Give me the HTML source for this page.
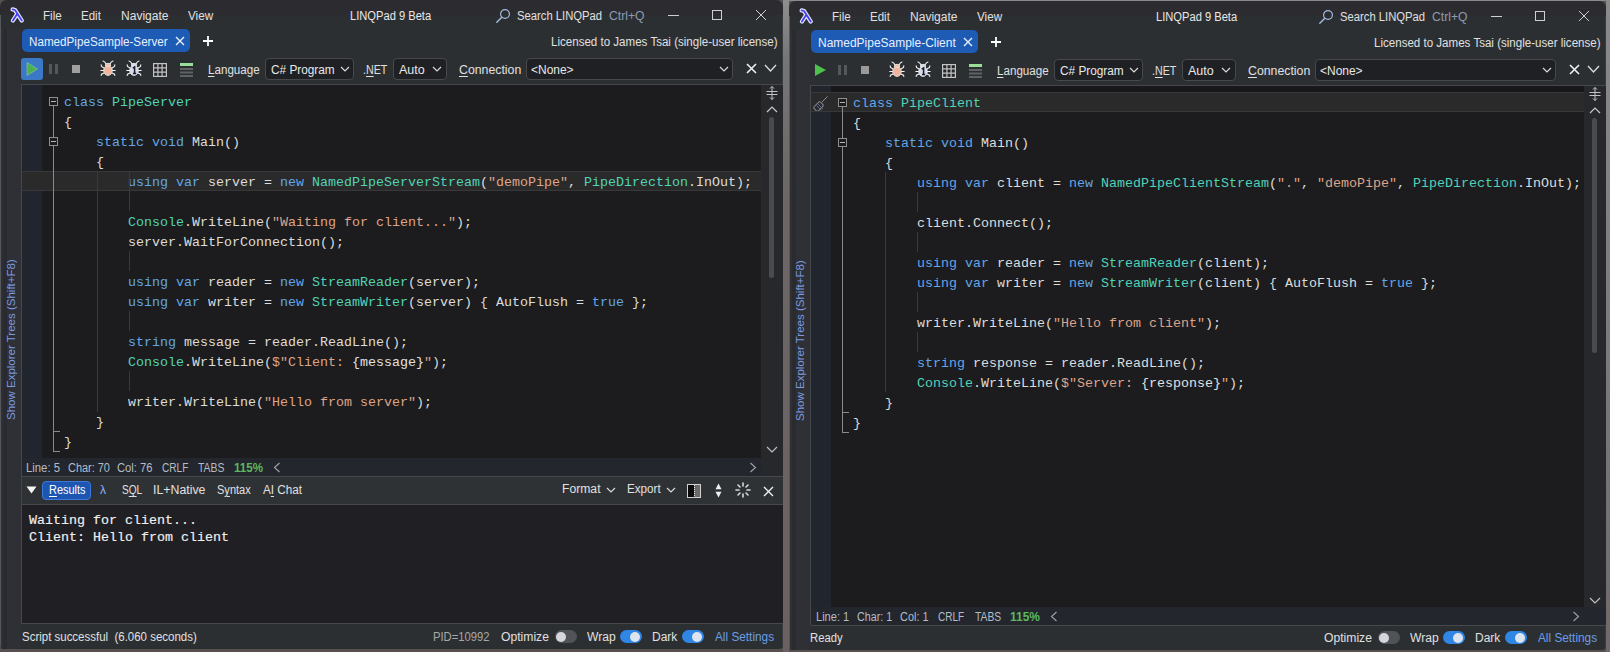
<!DOCTYPE html><html><head><meta charset="utf-8"><style>
*{margin:0;padding:0}
body{width:1610px;height:652px;overflow:hidden;position:relative;background:#57504f;font-family:"Liberation Sans",sans-serif}
.t{position:absolute;white-space:pre;line-height:14px}
.r{position:absolute}
.code{position:absolute;white-space:pre;font-family:"Liberation Mono",monospace;font-size:13.333px;line-height:20px;color:#dcdcdc}
u{text-decoration:underline;text-underline-offset:2px}
</style></head><body>
<div class="r" style="left:783px;top:0px;width:6px;height:652px;background:linear-gradient(#8e8e8e 0px,#767676 60px,#6c6666 200px,#6a6262 652px);"></div>
<div class="r" style="left:789px;top:0px;width:821px;height:1px;background:#8a8a8a;"></div>
<div class="r" style="left:1606px;top:0px;width:4px;height:652px;background:linear-gradient(#8a8a8a,#6e6a6a);"></div>
<div class="r" style="left:0px;top:0px;width:783px;height:649px;background:#2c2f32;border-radius:7px 7px 4px 4px;overflow:hidden;box-shadow:inset 1px 1px 0 #55575b, inset -1px 0 0 #3a3b3f">
<div class="r" style="left:0px;top:0px;width:783px;height:15px;background:#2c2c30;"></div>
<div class="r" style="left:1px;top:28px;width:20px;height:621px;background:#2e3035;"></div>
<div class="r" style="left:3px;top:28px;width:4px;height:621px;background:#2a2b2f;"></div>
<svg class="r" style="left:8px;top:6px;" width="18" height="18" viewBox="0 0 18 18"><path d="M4.6 3.4 L7 4 L13.8 14.6 M9.2 8 L4.9 14.6" fill="none" stroke="#dfe4ff" stroke-width="4.2" stroke-linecap="round" stroke-linejoin="round"/><path d="M4.6 3.4 L7 4 L13.8 14.6 M9.2 8 L4.9 14.6" fill="none" stroke="#4a3ff0" stroke-width="1.8" stroke-linecap="round" stroke-linejoin="round"/></svg>
<div class="t" style="left:42.73px;top:8.84px;font-size:12px;color:#e0e0e0;transform:scaleX(0.9667);transform-origin:0 0;">File</div>
<div class="t" style="left:80.64px;top:8.84px;font-size:12px;color:#e0e0e0;transform:scaleX(0.9600);transform-origin:0 0;">Edit</div>
<div class="t" style="left:120.70px;top:8.84px;font-size:12px;color:#e0e0e0;transform:scaleX(1.0043);transform-origin:0 0;">Navigate</div>
<div class="t" style="left:188.00px;top:8.84px;font-size:12px;color:#e0e0e0;transform:scaleX(0.9731);transform-origin:0 0;">View</div>
<div class="t" style="left:350.17px;top:8.84px;font-size:12px;color:#e8e8e8;transform:scaleX(0.9287);transform-origin:0 0;">LINQPad 9 Beta</div>
<svg class="r" style="left:495px;top:8px;" width="16" height="16" viewBox="0 0 16 16"><circle cx="10" cy="6" r="4.4" fill="none" stroke="#a4bce0" stroke-width="1.2"/><line x1="6.8" y1="9.2" x2="1.8" y2="14.2" stroke="#a4bce0" stroke-width="1.4" stroke-linecap="round"/></svg>
<div class="t" style="left:516.60px;top:8.84px;font-size:12px;color:#e0e0e0;transform:scaleX(0.9378);transform-origin:0 0;">Search LINQPad</div>
<div class="t" style="left:608.70px;top:8.84px;font-size:12px;color:#8c9bb0;transform:scaleX(1.0143);transform-origin:0 0;">Ctrl+Q</div>
<div class="r" style="left:668px;top:15px;width:11px;height:1px;background:#cfcfcf;"></div>
<div class="r" style="left:712px;top:10px;width:10px;height:10px;background:transparent;border:1px solid #cfcfcf;box-sizing:border-box"></div>
<svg class="r" style="left:755px;top:9px;" width="12" height="12" viewBox="0 0 12 12"><path d="M1 1 L11 11 M11 1 L1 11" stroke="#cfcfcf" stroke-width="1"/></svg>
<div class="r" style="left:22px;top:29px;width:168px;height:23px;background:#1d5bb5;border-radius:5px"></div>
<div class="t" style="left:29.03px;top:34.84px;font-size:12px;color:#e8f0ff;transform:scaleX(0.9718);transform-origin:0 0;">NamedPipeSample-Server</div>
<svg class="r" style="left:175px;top:36px;" width="10" height="10" viewBox="0 0 10 10"><path d="M1 1 L9 9 M9 1 L1 9" stroke="#e8f0ff" stroke-width="1.4"/></svg>
<svg class="r" style="left:203px;top:36px;" width="10" height="10" viewBox="0 0 10 10"><path d="M5 0 V10 M0 5 H10" stroke="#ffffff" stroke-width="1.8"/></svg>
<div class="t" style="left:551.34px;top:34.84px;font-size:12px;color:#e0e0e0;transform:scaleX(0.9632);transform-origin:0 0;">Licensed to James Tsai (single-user license)</div>
<div class="r" style="left:21px;top:58px;width:22px;height:22px;background:#3b78c6;border-radius:3px"></div>
<svg class="r" style="left:26px;top:62px;" width="12" height="14" viewBox="0 0 12 14"><path d="M1 0.5 L11.5 7 L1 13.5 Z" fill="#4caf50" stroke="#8fd18f" stroke-width="0.6"/></svg>
<svg class="r" style="left:49px;top:64px;" width="10" height="10" viewBox="0 0 10 10"><rect x="0" y="0" width="3" height="10" fill="#55575b"/><rect x="6" y="0" width="3" height="10" fill="#55575b"/></svg>
<div class="r" style="left:72px;top:65px;width:8px;height:8px;background:#a0a0a0;"></div>
<svg class="r" style="left:100px;top:60px;" width="16" height="17" viewBox="0 0 16 17"><g fill="none" stroke="#f4f4f4" stroke-width="1.1" stroke-linecap="round"><path d="M6.3 4.5 Q5 1.5 3 1 M9.7 4.5 Q11 1.5 13 1"/><path d="M4 8 L1.5 6.5 L1.2 4.8 M12 8 L14.5 6.5 L14.8 4.8 M3.5 10.5 H0.8 M12.5 10.5 H15.2 M4 13 L1.5 14.2 L1.2 15.5 M12 13 L14.5 14.2 L14.8 15.5"/></g><ellipse cx="8" cy="5.3" rx="2.6" ry="2" fill="#efb49c" stroke="#f4f4f4" stroke-width="0.8"/><ellipse cx="8" cy="10.6" rx="4.3" ry="4.8" fill="#efb49c" stroke="#f4f4f4" stroke-width="0.8"/></svg>
<svg class="r" style="left:126px;top:60px;" width="16" height="17" viewBox="0 0 16 17"><g fill="none" stroke="#f4f4f4" stroke-width="1.1" stroke-linecap="round"><path d="M6.3 4.5 Q5 1.5 3 1 M9.7 4.5 Q11 1.5 13 1"/><path d="M4 8 L1.5 6.5 L1.2 4.8 M12 8 L14.5 6.5 L14.8 4.8 M3.5 10.5 H0.8 M12.5 10.5 H15.2 M4 13 L1.5 14.2 L1.2 15.5 M12 13 L14.5 14.2 L14.8 15.5"/></g><ellipse cx="8" cy="5.3" rx="2.6" ry="2" fill="#d4dcea" stroke="#f4f4f4" stroke-width="0.8"/><ellipse cx="8" cy="10.6" rx="4.3" ry="4.8" fill="#d4dcea" stroke="#f4f4f4" stroke-width="0.8"/><path d="M6.8 8.2 L8.6 7 V13.4 M7 13.4 H10.2" fill="none" stroke="#1a1a2a" stroke-width="1.5"/></svg>
<svg class="r" style="left:153px;top:63px;" width="14" height="14" viewBox="0 0 14 14"><rect x="0.6" y="0.6" width="12.8" height="12.8" fill="#26272b" stroke="#c4c4c4" stroke-width="1.2"/><path d="M0.6 4.9 H13.4 M0.6 9.1 H13.4 M4.9 0.6 V13.4 M9.1 0.6 V13.4" stroke="#c4c4c4" stroke-width="1.2"/></svg>
<svg class="r" style="left:180px;top:63px;" width="13" height="14" viewBox="0 0 13 14"><rect x="0" y="0" width="13" height="3" fill="#98e098"/><rect x="0" y="5" width="13" height="2" fill="#606166"/><rect x="0" y="8.5" width="13" height="2" fill="#606166"/><rect x="0" y="12" width="13" height="2" fill="#606166"/></svg>
<div class="t" style="left:208.30px;top:62.84px;font-size:12px;color:#e0e0e0;transform:scaleX(0.9679);transform-origin:0 0;"><u>L</u>anguage</div>
<div class="r" style="left:265px;top:58px;width:89px;height:22px;background:#1f2024;border:1px solid #46484c;border-radius:4px;box-sizing:border-box"></div>
<div class="t" style="left:271.00px;top:62.84px;font-size:12px;color:#e8e8e8;transform:scaleX(0.9844);transform-origin:0 0;">C# Program</div>
<svg class="r" style="left:339.5px;top:66px;" width="10" height="7" viewBox="0 0 10 7"><polyline points="1,1 5.0,5 9,1" fill="none" stroke="#d8d8d8" stroke-width="1.2"/></svg>
<div class="t" style="left:363.11px;top:62.84px;font-size:12px;color:#e0e0e0;transform:scaleX(0.8889);transform-origin:0 0;">.<u>N</u>ET</div>
<div class="r" style="left:393px;top:58px;width:54px;height:22px;background:#1f2024;border:1px solid #46484c;border-radius:4px;box-sizing:border-box"></div>
<div class="t" style="left:399.00px;top:62.84px;font-size:12px;color:#e8e8e8;transform:scaleX(1.0400);transform-origin:0 0;">Auto</div>
<svg class="r" style="left:431.5px;top:66px;" width="10" height="7" viewBox="0 0 10 7"><polyline points="1,1 5.0,5 9,1" fill="none" stroke="#d8d8d8" stroke-width="1.2"/></svg>
<div class="t" style="left:459.00px;top:62.84px;font-size:12px;color:#e0e0e0;transform:scaleX(1.0250);transform-origin:0 0;"><u>C</u>onnection</div>
<div class="r" style="left:526px;top:58px;width:207px;height:22px;background:#1f2024;border:1px solid #46484c;border-radius:4px;box-sizing:border-box"></div>
<div class="t" style="left:530.50px;top:62.84px;font-size:12px;color:#e8e8e8;transform:scaleX(0.9977);transform-origin:0 0;">&lt;None&gt;</div>
<svg class="r" style="left:718.5px;top:66px;" width="10" height="7" viewBox="0 0 10 7"><polyline points="1,1 5.0,5 9,1" fill="none" stroke="#d8d8d8" stroke-width="1.2"/></svg>
<svg class="r" style="left:746px;top:63px;" width="11" height="11" viewBox="0 0 11 11"><path d="M1 1 L10 10 M10 1 L1 10" stroke="#f0f0f0" stroke-width="1.6"/></svg>
<svg class="r" style="left:764px;top:64px;" width="13" height="9" viewBox="0 0 13 9"><polyline points="1,1 6.5,7 12,1" fill="none" stroke="#d8d8d8" stroke-width="1.4"/></svg>
<div class="t" style="left:4px;top:420px;font-size:11.5px;color:#7b9ae0;transform-origin:0 0;transform:rotate(-90deg);white-space:nowrap">Show Explorer Trees (Shift+F8)</div>
<div class="r" style="left:21px;top:84px;width:762px;height:1px;background:#45474b;"></div>
<div class="r" style="left:21px;top:84px;width:1px;height:540px;background:#45474b;"></div>
<div class="r" style="left:22px;top:85px;width:20px;height:373px;background:#21252d;"></div>
<div class="r" style="left:42px;top:85px;width:719px;height:373px;background:#1c1c1e;"></div>
<div class="r" style="left:761px;top:85px;width:22px;height:391px;background:#27282c;"></div>
<div class="r" style="left:22px;top:171px;width:739px;height:20px;background:#2a2a2b;border-top:1px solid #38383a;border-bottom:1px solid #38383a;box-sizing:border-box"></div>
<div class="code" style="left:64px;top:93px"><span style="color:#62a6e6">class</span> <span style="color:#52d2b6">PipeServer</span></div>
<div class="code" style="left:64px;top:113px">{</div>
<div class="code" style="left:64px;top:133px">    <span style="color:#62a6e6">static</span> <span style="color:#62a6e6">void</span> Main()</div>
<div class="code" style="left:64px;top:153px">    {</div>
<div class="code" style="left:64px;top:173px">        <span style="color:#62a6e6">using</span> <span style="color:#62a6e6">var</span> server = <span style="color:#62a6e6">new</span> <span style="color:#52d2b6">NamedPipeServerStream</span>(<span style="color:#dea48a">&quot;demoPipe&quot;</span>, <span style="color:#52d2b6">PipeDirection</span>.InOut);</div>
<div class="code" style="left:64px;top:193px"></div>
<div class="code" style="left:64px;top:213px">        <span style="color:#52d2b6">Console</span>.WriteLine(<span style="color:#dea48a">&quot;Waiting for client...&quot;</span>);</div>
<div class="code" style="left:64px;top:233px">        server.WaitForConnection();</div>
<div class="code" style="left:64px;top:253px"></div>
<div class="code" style="left:64px;top:273px">        <span style="color:#62a6e6">using</span> <span style="color:#62a6e6">var</span> reader = <span style="color:#62a6e6">new</span> <span style="color:#52d2b6">StreamReader</span>(server);</div>
<div class="code" style="left:64px;top:293px">        <span style="color:#62a6e6">using</span> <span style="color:#62a6e6">var</span> writer = <span style="color:#62a6e6">new</span> <span style="color:#52d2b6">StreamWriter</span>(server) { AutoFlush = <span style="color:#62a6e6">true</span> };</div>
<div class="code" style="left:64px;top:313px"></div>
<div class="code" style="left:64px;top:333px">        <span style="color:#62a6e6">string</span> message = reader.ReadLine();</div>
<div class="code" style="left:64px;top:353px">        <span style="color:#52d2b6">Console</span>.WriteLine(<span style="color:#dea48a">$&quot;Client: </span><span style="color:#e2e2e2">{message}</span><span style="color:#dea48a">&quot;</span>);</div>
<div class="code" style="left:64px;top:373px"></div>
<div class="code" style="left:64px;top:393px">        writer.WriteLine(<span style="color:#dea48a">&quot;Hello from server&quot;</span>);</div>
<div class="code" style="left:64px;top:413px">    }</div>
<div class="code" style="left:64px;top:433px">}</div>
<div class="r" style="left:49px;top:97px;width:9px;height:9px;background:#1c1c1e;border:1px solid #8e8e8e;box-sizing:border-box"></div>
<div class="r" style="left:51px;top:101px;width:5px;height:1px;background:#b4b4b4;"></div>
<div class="r" style="left:49px;top:137px;width:9px;height:9px;background:#1c1c1e;border:1px solid #8e8e8e;box-sizing:border-box"></div>
<div class="r" style="left:51px;top:141px;width:5px;height:1px;background:#b4b4b4;"></div>
<div class="r" style="left:53px;top:106px;width:1px;height:31px;background:#8a8a8a;"></div>
<div class="r" style="left:53px;top:146px;width:1px;height:306px;background:#8a8a8a;"></div>
<div class="r" style="left:53px;top:451px;width:7px;height:1px;background:#8a8a8a;"></div>
<div class="r" style="left:53px;top:431px;width:7px;height:1px;background:#8a8a8a;"></div>
<div class="r" style="left:97px;top:171px;width:1px;height:241px;background:#3a3a3c;"></div>
<div class="r" style="left:129px;top:171px;width:1px;height:20px;background:#3a3a3c;"></div>
<div class="r" style="left:129px;top:191px;width:1px;height:20px;background:#3a3a3c;"></div>
<div class="r" style="left:129px;top:251px;width:1px;height:20px;background:#3a3a3c;"></div>
<div class="r" style="left:129px;top:311px;width:1px;height:20px;background:#3a3a3c;"></div>
<div class="r" style="left:129px;top:371px;width:1px;height:20px;background:#3a3a3c;"></div>
<svg class="r" style="left:766px;top:86px;" width="12" height="14" viewBox="0 0 12 14"><path d="M6 0.5 V13.5 M4 2.5 L6 0.5 L8 2.5 M4 11.5 L6 13.5 L8 11.5 M0.5 5.5 H11.5 M0.5 8.5 H11.5" fill="none" stroke="#c4c4c4" stroke-width="1"/></svg>
<svg class="r" style="left:766px;top:105px;" width="12" height="8" viewBox="0 0 12 8"><polyline points="1,7 6,2 11,7" fill="none" stroke="#c8c8c8" stroke-width="1.2"/></svg>
<div class="r" style="left:769px;top:117px;width:5px;height:161px;background:#4a4b4f;border-radius:3px"></div>
<svg class="r" style="left:766px;top:446px;" width="12" height="8" viewBox="0 0 12 8"><polyline points="1,1 6.0,6 11,1" fill="none" stroke="#c0c0c0" stroke-width="1.2"/></svg>
<div class="r" style="left:22px;top:458px;width:739px;height:18px;background:#23262d;"></div>
<div class="t" style="left:26.06px;top:460.84px;font-size:12px;color:#b4bcc6;transform:scaleX(0.9429);transform-origin:0 0;">Line: 5</div>
<div class="t" style="left:67.50px;top:460.84px;font-size:12px;color:#b4bcc6;transform:scaleX(0.9109);transform-origin:0 0;">Char: 70</div>
<div class="t" style="left:116.50px;top:460.84px;font-size:12px;color:#b4bcc6;transform:scaleX(0.9342);transform-origin:0 0;">Col: 76</div>
<div class="t" style="left:161.60px;top:460.84px;font-size:12px;color:#b4bcc6;transform:scaleX(0.8419);transform-origin:0 0;">CRLF</div>
<div class="t" style="left:198.00px;top:460.84px;font-size:12px;color:#b4bcc6;transform:scaleX(0.8667);transform-origin:0 0;">TABS</div>
<div class="t" style="left:234.00px;top:460.84px;font-size:12px;color:#5cb85c;transform:scaleX(0.9667);transform-origin:0 0;"><b>115%</b></div>
<svg class="r" style="left:273px;top:462px;" width="8" height="11" viewBox="0 0 8 11"><polyline points="6.5,1 1.5,5.5 6.5,10" fill="none" stroke="#a0a4aa" stroke-width="1.1"/></svg>
<svg class="r" style="left:748.5px;top:462px;" width="8" height="11" viewBox="0 0 8 11"><polyline points="1.5,1 6.5,5.5 1.5,10" fill="none" stroke="#a0a4aa" stroke-width="1.1"/></svg>
<div class="r" style="left:22px;top:476px;width:761px;height:1px;background:#46484c;"></div>
<div class="r" style="left:22px;top:477px;width:761px;height:27px;background:#2f3235;"></div>
<svg class="r" style="left:26px;top:486px;" width="11" height="8" viewBox="0 0 11 8"><path d="M0.5 0.5 H10.5 L5.5 7.5 Z" fill="#f4f4f4"/></svg>
<div class="r" style="left:42px;top:481px;width:49px;height:19px;background:#1d56b0;border:1px solid #3c78d8;border-radius:4px;box-sizing:border-box"></div>
<div class="t" style="left:48.50px;top:482.84px;font-size:12px;color:#ffffff;transform:scaleX(0.9125);transform-origin:0 0;"><u>R</u>esults</div>
<div class="t" style="left:100.00px;top:482.84px;font-size:12px;color:#8ab0ff;">λ</div>
<div class="t" style="left:121.50px;top:482.84px;font-size:12px;color:#e0e0e0;transform:scaleX(0.8417);transform-origin:0 0;">S<u>Q</u>L</div>
<div class="t" style="left:152.97px;top:482.84px;font-size:12px;color:#e0e0e0;transform:scaleX(1.0280);transform-origin:0 0;">IL+Native</div>
<div class="t" style="left:217.00px;top:482.84px;font-size:12px;color:#e0e0e0;transform:scaleX(0.9189);transform-origin:0 0;">S<u>y</u>ntax</div>
<div class="t" style="left:263.00px;top:482.84px;font-size:12px;color:#e0e0e0;transform:scaleX(0.9750);transform-origin:0 0;">A<u>I</u> Chat</div>
<div class="t" style="left:562.39px;top:481.84px;font-size:12px;color:#e0e0e0;transform:scaleX(1.0135);transform-origin:0 0;">Format</div>
<svg class="r" style="left:606px;top:487px;" width="10" height="7" viewBox="0 0 10 7"><polyline points="1,1 5.0,5 9,1" fill="none" stroke="#d8d8d8" stroke-width="1.2"/></svg>
<div class="t" style="left:627.33px;top:481.84px;font-size:12px;color:#e0e0e0;transform:scaleX(0.9706);transform-origin:0 0;">Export</div>
<svg class="r" style="left:666px;top:487px;" width="10" height="7" viewBox="0 0 10 7"><polyline points="1,1 5.0,5 9,1" fill="none" stroke="#d8d8d8" stroke-width="1.2"/></svg>
<svg class="r" style="left:687px;top:484px;" width="14" height="14" viewBox="0 0 14 14"><rect x="0.5" y="0.5" width="13" height="13" fill="#6a6a6a" stroke="#d0d0d0"/><rect x="1" y="1" width="6" height="12" fill="#0a0a0a"/><line x1="7.5" y1="1" x2="7.5" y2="13" stroke="#e0e0e0" stroke-dasharray="1,1"/></svg>
<svg class="r" style="left:715px;top:483px;" width="7" height="15" viewBox="0 0 7 15"><path d="M3.5 0.5 L6.5 6.3 H0.5 Z M3.5 14.5 L6.5 8.7 H0.5 Z" fill="#f0f0f0"/></svg>
<svg class="r" style="left:735px;top:482px;" width="16" height="16" viewBox="0 0 16 16"><g stroke="#d8d8d8" stroke-width="1.6" stroke-linecap="round"><line x1="8" y1="1" x2="8" y2="4"/><line x1="8" y1="12" x2="8" y2="15"/><line x1="1" y1="8" x2="4" y2="8"/><line x1="12" y1="8" x2="15" y2="8"/><line x1="3" y1="3" x2="5" y2="5"/><line x1="11" y1="11" x2="13" y2="13"/><line x1="13" y1="3" x2="11" y2="5"/><line x1="5" y1="11" x2="3" y2="13"/></g></svg>
<svg class="r" style="left:763px;top:486px;" width="11" height="11" viewBox="0 0 11 11"><path d="M1 1 L10 10 M10 1 L1 10" stroke="#f0f0f0" stroke-width="1.4"/></svg>
<div class="r" style="left:22px;top:504px;width:761px;height:1px;background:#46484c;"></div>
<div class="r" style="left:22px;top:505px;width:761px;height:119px;background:#1f1f24;"></div>
<div class="code" style="left:29px;top:512px;line-height:17px;color:#f0f0f0;-webkit-text-stroke:0.15px #f0f0f0">Waiting for client...
Client: Hello from client</div>
<div class="r" style="left:21px;top:505px;width:1px;height:119px;background:#46484c;"></div>
<div class="r" style="left:21px;top:623px;width:762px;height:1px;background:#46484c;"></div>
<div class="t" style="left:22.00px;top:629.84px;font-size:12px;color:#e0e0e0;transform:scaleX(0.9560);transform-origin:0 0;">Script successful  (6.060 seconds)</div>
<div class="t" style="left:432.56px;top:629.84px;font-size:12px;color:#a8a8a8;transform:scaleX(0.9356);transform-origin:0 0;">PID=10992</div>
<div class="t" style="left:501.40px;top:629.84px;font-size:12px;color:#e0e0e0;transform:scaleX(1.0128);transform-origin:0 0;">Optimize</div>
<div class="r" style="left:554.5px;top:630px;width:22px;height:13px;background:#515359;border-radius:7px"></div>
<div class="r" style="left:556px;top:631.5px;width:10px;height:10px;background:#d6d6de;border-radius:50%"></div>
<div class="t" style="left:586.80px;top:629.84px;font-size:12px;color:#e0e0e0;transform:scaleX(1.0071);transform-origin:0 0;">Wrap</div>
<div class="r" style="left:620px;top:630px;width:22px;height:13px;background:#2f86e4;border-radius:7px"></div>
<div class="r" style="left:630px;top:631.5px;width:10px;height:10px;background:#dde4f0;border-radius:50%"></div>
<div class="t" style="left:652.00px;top:629.84px;font-size:12px;color:#e0e0e0;transform:scaleX(1.0000);transform-origin:0 0;">Dark</div>
<div class="r" style="left:682px;top:630px;width:22px;height:13px;background:#2f86e4;border-radius:7px"></div>
<div class="r" style="left:692px;top:631.5px;width:10px;height:10px;background:#dde4f0;border-radius:50%"></div>
<div class="t" style="left:715.00px;top:629.84px;font-size:12px;color:#6a9ee6;transform:scaleX(0.9833);transform-origin:0 0;">All Settings</div>
</div>
<div class="r" style="left:789px;top:1px;width:817px;height:649px;background:#2c2f32;border-radius:7px 7px 4px 4px;overflow:hidden;box-shadow:inset 1px 1px 0 #55575b, inset -1px 0 0 #3a3b3f">
<div class="r" style="left:0px;top:0px;width:817px;height:15px;background:#2c2c30;"></div>
<div class="r" style="left:1px;top:28px;width:20px;height:621px;background:#2e3035;"></div>
<div class="r" style="left:3px;top:28px;width:4px;height:621px;background:#2a2b2f;"></div>
<svg class="r" style="left:8px;top:6px;" width="18" height="18" viewBox="0 0 18 18"><path d="M4.6 3.4 L7 4 L13.8 14.6 M9.2 8 L4.9 14.6" fill="none" stroke="#dfe4ff" stroke-width="4.2" stroke-linecap="round" stroke-linejoin="round"/><path d="M4.6 3.4 L7 4 L13.8 14.6 M9.2 8 L4.9 14.6" fill="none" stroke="#4a3ff0" stroke-width="1.8" stroke-linecap="round" stroke-linejoin="round"/></svg>
<div class="t" style="left:42.73px;top:8.84px;font-size:12px;color:#e0e0e0;transform:scaleX(0.9667);transform-origin:0 0;">File</div>
<div class="t" style="left:80.64px;top:8.84px;font-size:12px;color:#e0e0e0;transform:scaleX(0.9600);transform-origin:0 0;">Edit</div>
<div class="t" style="left:120.70px;top:8.84px;font-size:12px;color:#e0e0e0;transform:scaleX(1.0043);transform-origin:0 0;">Navigate</div>
<div class="t" style="left:188.00px;top:8.84px;font-size:12px;color:#e0e0e0;transform:scaleX(0.9731);transform-origin:0 0;">View</div>
<div class="t" style="left:367.17px;top:8.84px;font-size:12px;color:#e8e8e8;transform:scaleX(0.9287);transform-origin:0 0;">LINQPad 9 Beta</div>
<svg class="r" style="left:529px;top:8px;" width="16" height="16" viewBox="0 0 16 16"><circle cx="10" cy="6" r="4.4" fill="none" stroke="#a4bce0" stroke-width="1.2"/><line x1="6.8" y1="9.2" x2="1.8" y2="14.2" stroke="#a4bce0" stroke-width="1.4" stroke-linecap="round"/></svg>
<div class="t" style="left:550.60px;top:8.84px;font-size:12px;color:#e0e0e0;transform:scaleX(0.9378);transform-origin:0 0;">Search LINQPad</div>
<div class="t" style="left:642.70px;top:8.84px;font-size:12px;color:#8c9bb0;transform:scaleX(1.0143);transform-origin:0 0;">Ctrl+Q</div>
<div class="r" style="left:702px;top:15px;width:11px;height:1px;background:#cfcfcf;"></div>
<div class="r" style="left:746px;top:10px;width:10px;height:10px;background:transparent;border:1px solid #cfcfcf;box-sizing:border-box"></div>
<svg class="r" style="left:789px;top:9px;" width="12" height="12" viewBox="0 0 12 12"><path d="M1 1 L11 11 M11 1 L1 11" stroke="#cfcfcf" stroke-width="1"/></svg>
<div class="r" style="left:22px;top:29px;width:167px;height:23px;background:#1d5bb5;border-radius:5px"></div>
<div class="t" style="left:29.30px;top:34.84px;font-size:12px;color:#e8f0ff;transform:scaleX(0.9978);transform-origin:0 0;">NamedPipeSample-Client</div>
<svg class="r" style="left:174px;top:36px;" width="10" height="10" viewBox="0 0 10 10"><path d="M1 1 L9 9 M9 1 L1 9" stroke="#e8f0ff" stroke-width="1.4"/></svg>
<svg class="r" style="left:202px;top:36px;" width="10" height="10" viewBox="0 0 10 10"><path d="M5 0 V10 M0 5 H10" stroke="#ffffff" stroke-width="1.8"/></svg>
<div class="t" style="left:585.34px;top:34.84px;font-size:12px;color:#e0e0e0;transform:scaleX(0.9632);transform-origin:0 0;">Licensed to James Tsai (single-user license)</div>
<svg class="r" style="left:25px;top:62px;" width="14" height="14" viewBox="0 0 14 14"><path d="M1 1 L12 7 L1 13 Z" fill="#4cc14e"/></svg>
<svg class="r" style="left:49px;top:64px;" width="10" height="10" viewBox="0 0 10 10"><rect x="0" y="0" width="3" height="10" fill="#55575b"/><rect x="6" y="0" width="3" height="10" fill="#55575b"/></svg>
<div class="r" style="left:72px;top:65px;width:8px;height:8px;background:#9a9a9a;"></div>
<svg class="r" style="left:100px;top:60px;" width="16" height="17" viewBox="0 0 16 17"><g fill="none" stroke="#f4f4f4" stroke-width="1.1" stroke-linecap="round"><path d="M6.3 4.5 Q5 1.5 3 1 M9.7 4.5 Q11 1.5 13 1"/><path d="M4 8 L1.5 6.5 L1.2 4.8 M12 8 L14.5 6.5 L14.8 4.8 M3.5 10.5 H0.8 M12.5 10.5 H15.2 M4 13 L1.5 14.2 L1.2 15.5 M12 13 L14.5 14.2 L14.8 15.5"/></g><ellipse cx="8" cy="5.3" rx="2.6" ry="2" fill="#efb49c" stroke="#f4f4f4" stroke-width="0.8"/><ellipse cx="8" cy="10.6" rx="4.3" ry="4.8" fill="#efb49c" stroke="#f4f4f4" stroke-width="0.8"/></svg>
<svg class="r" style="left:126px;top:60px;" width="16" height="17" viewBox="0 0 16 17"><g fill="none" stroke="#f4f4f4" stroke-width="1.1" stroke-linecap="round"><path d="M6.3 4.5 Q5 1.5 3 1 M9.7 4.5 Q11 1.5 13 1"/><path d="M4 8 L1.5 6.5 L1.2 4.8 M12 8 L14.5 6.5 L14.8 4.8 M3.5 10.5 H0.8 M12.5 10.5 H15.2 M4 13 L1.5 14.2 L1.2 15.5 M12 13 L14.5 14.2 L14.8 15.5"/></g><ellipse cx="8" cy="5.3" rx="2.6" ry="2" fill="#d4dcea" stroke="#f4f4f4" stroke-width="0.8"/><ellipse cx="8" cy="10.6" rx="4.3" ry="4.8" fill="#d4dcea" stroke="#f4f4f4" stroke-width="0.8"/><path d="M6.8 8.2 L8.6 7 V13.4 M7 13.4 H10.2" fill="none" stroke="#1a1a2a" stroke-width="1.5"/></svg>
<svg class="r" style="left:153px;top:63px;" width="14" height="14" viewBox="0 0 14 14"><rect x="0.6" y="0.6" width="12.8" height="12.8" fill="#26272b" stroke="#c4c4c4" stroke-width="1.2"/><path d="M0.6 4.9 H13.4 M0.6 9.1 H13.4 M4.9 0.6 V13.4 M9.1 0.6 V13.4" stroke="#c4c4c4" stroke-width="1.2"/></svg>
<svg class="r" style="left:180px;top:63px;" width="13" height="14" viewBox="0 0 13 14"><rect x="0" y="0" width="13" height="3" fill="#98e098"/><rect x="0" y="5" width="13" height="2" fill="#606166"/><rect x="0" y="8.5" width="13" height="2" fill="#606166"/><rect x="0" y="12" width="13" height="2" fill="#606166"/></svg>
<div class="t" style="left:208.30px;top:62.84px;font-size:12px;color:#e0e0e0;transform:scaleX(0.9679);transform-origin:0 0;"><u>L</u>anguage</div>
<div class="r" style="left:265px;top:58px;width:89px;height:22px;background:#1f2024;border:1px solid #46484c;border-radius:4px;box-sizing:border-box"></div>
<div class="t" style="left:271.00px;top:62.84px;font-size:12px;color:#e8e8e8;transform:scaleX(0.9844);transform-origin:0 0;">C# Program</div>
<svg class="r" style="left:339.5px;top:66px;" width="10" height="7" viewBox="0 0 10 7"><polyline points="1,1 5.0,5 9,1" fill="none" stroke="#d8d8d8" stroke-width="1.2"/></svg>
<div class="t" style="left:363.11px;top:62.84px;font-size:12px;color:#e0e0e0;transform:scaleX(0.8889);transform-origin:0 0;">.<u>N</u>ET</div>
<div class="r" style="left:393px;top:58px;width:54px;height:22px;background:#1f2024;border:1px solid #46484c;border-radius:4px;box-sizing:border-box"></div>
<div class="t" style="left:399.00px;top:62.84px;font-size:12px;color:#e8e8e8;transform:scaleX(1.0400);transform-origin:0 0;">Auto</div>
<svg class="r" style="left:431.5px;top:66px;" width="10" height="7" viewBox="0 0 10 7"><polyline points="1,1 5.0,5 9,1" fill="none" stroke="#d8d8d8" stroke-width="1.2"/></svg>
<div class="t" style="left:459.00px;top:62.84px;font-size:12px;color:#e0e0e0;transform:scaleX(1.0250);transform-origin:0 0;"><u>C</u>onnection</div>
<div class="r" style="left:526px;top:58px;width:241px;height:22px;background:#1f2024;border:1px solid #46484c;border-radius:4px;box-sizing:border-box"></div>
<div class="t" style="left:530.50px;top:62.84px;font-size:12px;color:#e8e8e8;transform:scaleX(0.9977);transform-origin:0 0;">&lt;None&gt;</div>
<svg class="r" style="left:752.5px;top:66px;" width="10" height="7" viewBox="0 0 10 7"><polyline points="1,1 5.0,5 9,1" fill="none" stroke="#d8d8d8" stroke-width="1.2"/></svg>
<svg class="r" style="left:780px;top:63px;" width="11" height="11" viewBox="0 0 11 11"><path d="M1 1 L10 10 M10 1 L1 10" stroke="#f0f0f0" stroke-width="1.6"/></svg>
<svg class="r" style="left:798px;top:64px;" width="13" height="9" viewBox="0 0 13 9"><polyline points="1,1 6.5,7 12,1" fill="none" stroke="#d8d8d8" stroke-width="1.4"/></svg>
<div class="t" style="left:4px;top:420px;font-size:11.5px;color:#7b9ae0;transform-origin:0 0;transform:rotate(-90deg);white-space:nowrap">Show Explorer Trees (Shift+F8)</div>
<div class="r" style="left:21px;top:84px;width:796px;height:1px;background:#45474b;"></div>
<div class="r" style="left:21px;top:84px;width:1px;height:540px;background:#45474b;"></div>
<div class="r" style="left:22px;top:85px;width:20px;height:521px;background:#21252d;"></div>
<div class="r" style="left:42px;top:85px;width:753px;height:521px;background:#1c1c1e;"></div>
<div class="r" style="left:795px;top:85px;width:22px;height:539px;background:#27282c;"></div>
<div class="r" style="left:42px;top:85px;width:753px;height:6px;background:#18181a;"></div>
<div class="r" style="left:22px;top:85px;width:20px;height:6px;background:#22252c;"></div>
<div class="r" style="left:22px;top:91px;width:773px;height:20px;background:#2a2a2b;border-top:1px solid #38383a;border-bottom:1px solid #38383a;box-sizing:border-box"></div>
<svg class="r" style="left:24px;top:94px;" width="16" height="16" viewBox="0 0 16 16"><g fill="none" stroke="#8a8e98" stroke-width="1"><line x1="14.5" y1="1.5" x2="9" y2="7"/><rect x="2.5" y="7" width="6" height="9" rx="1.5" transform="rotate(45 5.5 11.5)"/><path d="M3.5 10.5 L8.5 15.5 M5 9 L10 14" stroke="#6a7aa8" stroke-width="0.8"/></g></svg>
<div class="code" style="left:64px;top:93px"><span style="color:#62a6e6">class</span> <span style="color:#52d2b6">PipeClient</span></div>
<div class="code" style="left:64px;top:113px">{</div>
<div class="code" style="left:64px;top:133px">    <span style="color:#62a6e6">static</span> <span style="color:#62a6e6">void</span> Main()</div>
<div class="code" style="left:64px;top:153px">    {</div>
<div class="code" style="left:64px;top:173px">        <span style="color:#62a6e6">using</span> <span style="color:#62a6e6">var</span> client = <span style="color:#62a6e6">new</span> <span style="color:#52d2b6">NamedPipeClientStream</span>(<span style="color:#dea48a">&quot;.&quot;</span>, <span style="color:#dea48a">&quot;demoPipe&quot;</span>, <span style="color:#52d2b6">PipeDirection</span>.InOut);</div>
<div class="code" style="left:64px;top:193px"></div>
<div class="code" style="left:64px;top:213px">        client.Connect();</div>
<div class="code" style="left:64px;top:233px"></div>
<div class="code" style="left:64px;top:253px">        <span style="color:#62a6e6">using</span> <span style="color:#62a6e6">var</span> reader = <span style="color:#62a6e6">new</span> <span style="color:#52d2b6">StreamReader</span>(client);</div>
<div class="code" style="left:64px;top:273px">        <span style="color:#62a6e6">using</span> <span style="color:#62a6e6">var</span> writer = <span style="color:#62a6e6">new</span> <span style="color:#52d2b6">StreamWriter</span>(client) { AutoFlush = <span style="color:#62a6e6">true</span> };</div>
<div class="code" style="left:64px;top:293px"></div>
<div class="code" style="left:64px;top:313px">        writer.WriteLine(<span style="color:#dea48a">&quot;Hello from client&quot;</span>);</div>
<div class="code" style="left:64px;top:333px"></div>
<div class="code" style="left:64px;top:353px">        <span style="color:#62a6e6">string</span> response = reader.ReadLine();</div>
<div class="code" style="left:64px;top:373px">        <span style="color:#52d2b6">Console</span>.WriteLine(<span style="color:#dea48a">$&quot;Server: </span><span style="color:#e2e2e2">{response}</span><span style="color:#dea48a">&quot;</span>);</div>
<div class="code" style="left:64px;top:393px">    }</div>
<div class="code" style="left:64px;top:413px">}</div>
<div class="r" style="left:49px;top:97px;width:9px;height:9px;background:#1c1c1e;border:1px solid #8e8e8e;box-sizing:border-box"></div>
<div class="r" style="left:51px;top:101px;width:5px;height:1px;background:#b4b4b4;"></div>
<div class="r" style="left:49px;top:137px;width:9px;height:9px;background:#1c1c1e;border:1px solid #8e8e8e;box-sizing:border-box"></div>
<div class="r" style="left:51px;top:141px;width:5px;height:1px;background:#b4b4b4;"></div>
<div class="r" style="left:53px;top:106px;width:1px;height:31px;background:#8a8a8a;"></div>
<div class="r" style="left:53px;top:146px;width:1px;height:286px;background:#8a8a8a;"></div>
<div class="r" style="left:53px;top:431px;width:7px;height:1px;background:#8a8a8a;"></div>
<div class="r" style="left:53px;top:411px;width:7px;height:1px;background:#8a8a8a;"></div>
<div class="r" style="left:96px;top:171px;width:1px;height:220px;background:#3a3a3c;"></div>
<div class="r" style="left:128px;top:191px;width:1px;height:20px;background:#3a3a3c;"></div>
<div class="r" style="left:128px;top:231px;width:1px;height:20px;background:#3a3a3c;"></div>
<div class="r" style="left:128px;top:291px;width:1px;height:20px;background:#3a3a3c;"></div>
<div class="r" style="left:128px;top:331px;width:1px;height:20px;background:#3a3a3c;"></div>
<svg class="r" style="left:800px;top:86px;" width="12" height="14" viewBox="0 0 12 14"><path d="M6 0.5 V13.5 M4 2.5 L6 0.5 L8 2.5 M4 11.5 L6 13.5 L8 11.5 M0.5 5.5 H11.5 M0.5 8.5 H11.5" fill="none" stroke="#c4c4c4" stroke-width="1"/></svg>
<svg class="r" style="left:800px;top:105px;" width="12" height="8" viewBox="0 0 12 8"><polyline points="1,7 6,2 11,7" fill="none" stroke="#c8c8c8" stroke-width="1.2"/></svg>
<div class="r" style="left:803px;top:117px;width:5px;height:235px;background:#4a4b4f;border-radius:3px"></div>
<svg class="r" style="left:800px;top:596px;" width="12" height="8" viewBox="0 0 12 8"><polyline points="1,1 6.0,6 11,1" fill="none" stroke="#c0c0c0" stroke-width="1.2"/></svg>
<div class="r" style="left:22px;top:606px;width:795px;height:18px;background:#23262d;"></div>
<div class="t" style="left:26.58px;top:608.84px;font-size:12px;color:#b4bcc6;transform:scaleX(0.9229);transform-origin:0 0;">Line: 1</div>
<div class="t" style="left:67.80px;top:608.84px;font-size:12px;color:#b4bcc6;transform:scaleX(0.8923);transform-origin:0 0;">Char: 1</div>
<div class="t" style="left:110.70px;top:608.84px;font-size:12px;color:#b4bcc6;transform:scaleX(0.9097);transform-origin:0 0;">Col: 1</div>
<div class="t" style="left:149.40px;top:608.84px;font-size:12px;color:#b4bcc6;transform:scaleX(0.8355);transform-origin:0 0;">CRLF</div>
<div class="t" style="left:185.80px;top:608.84px;font-size:12px;color:#b4bcc6;transform:scaleX(0.8600);transform-origin:0 0;">TABS</div>
<div class="t" style="left:221.30px;top:608.84px;font-size:12px;color:#5cb85c;transform:scaleX(0.9967);transform-origin:0 0;"><b>115%</b></div>
<svg class="r" style="left:261.2px;top:610px;" width="8" height="11" viewBox="0 0 8 11"><polyline points="6.5,1 1.5,5.5 6.5,10" fill="none" stroke="#a0a4aa" stroke-width="1.1"/></svg>
<svg class="r" style="left:782.5px;top:610px;" width="8" height="11" viewBox="0 0 8 11"><polyline points="1.5,1 6.5,5.5 1.5,10" fill="none" stroke="#a0a4aa" stroke-width="1.1"/></svg>
<div class="r" style="left:22px;top:624px;width:795px;height:1px;background:#46484c;"></div>
<div class="t" style="left:21.46px;top:629.84px;font-size:12px;color:#e0e0e0;transform:scaleX(0.9382);transform-origin:0 0;">Ready</div>
<div class="t" style="left:535.40px;top:629.84px;font-size:12px;color:#e0e0e0;transform:scaleX(1.0128);transform-origin:0 0;">Optimize</div>
<div class="r" style="left:588.5px;top:630px;width:22px;height:13px;background:#515359;border-radius:7px"></div>
<div class="r" style="left:590px;top:631.5px;width:10px;height:10px;background:#d6d6de;border-radius:50%"></div>
<div class="t" style="left:620.80px;top:629.84px;font-size:12px;color:#e0e0e0;transform:scaleX(1.0071);transform-origin:0 0;">Wrap</div>
<div class="r" style="left:654px;top:630px;width:22px;height:13px;background:#2f86e4;border-radius:7px"></div>
<div class="r" style="left:664px;top:631.5px;width:10px;height:10px;background:#dde4f0;border-radius:50%"></div>
<div class="t" style="left:686.00px;top:629.84px;font-size:12px;color:#e0e0e0;transform:scaleX(1.0000);transform-origin:0 0;">Dark</div>
<div class="r" style="left:716px;top:630px;width:22px;height:13px;background:#2f86e4;border-radius:7px"></div>
<div class="r" style="left:726px;top:631.5px;width:10px;height:10px;background:#dde4f0;border-radius:50%"></div>
<div class="t" style="left:749.00px;top:629.84px;font-size:12px;color:#6a9ee6;transform:scaleX(0.9833);transform-origin:0 0;">All Settings</div>
</div>
</body></html>
